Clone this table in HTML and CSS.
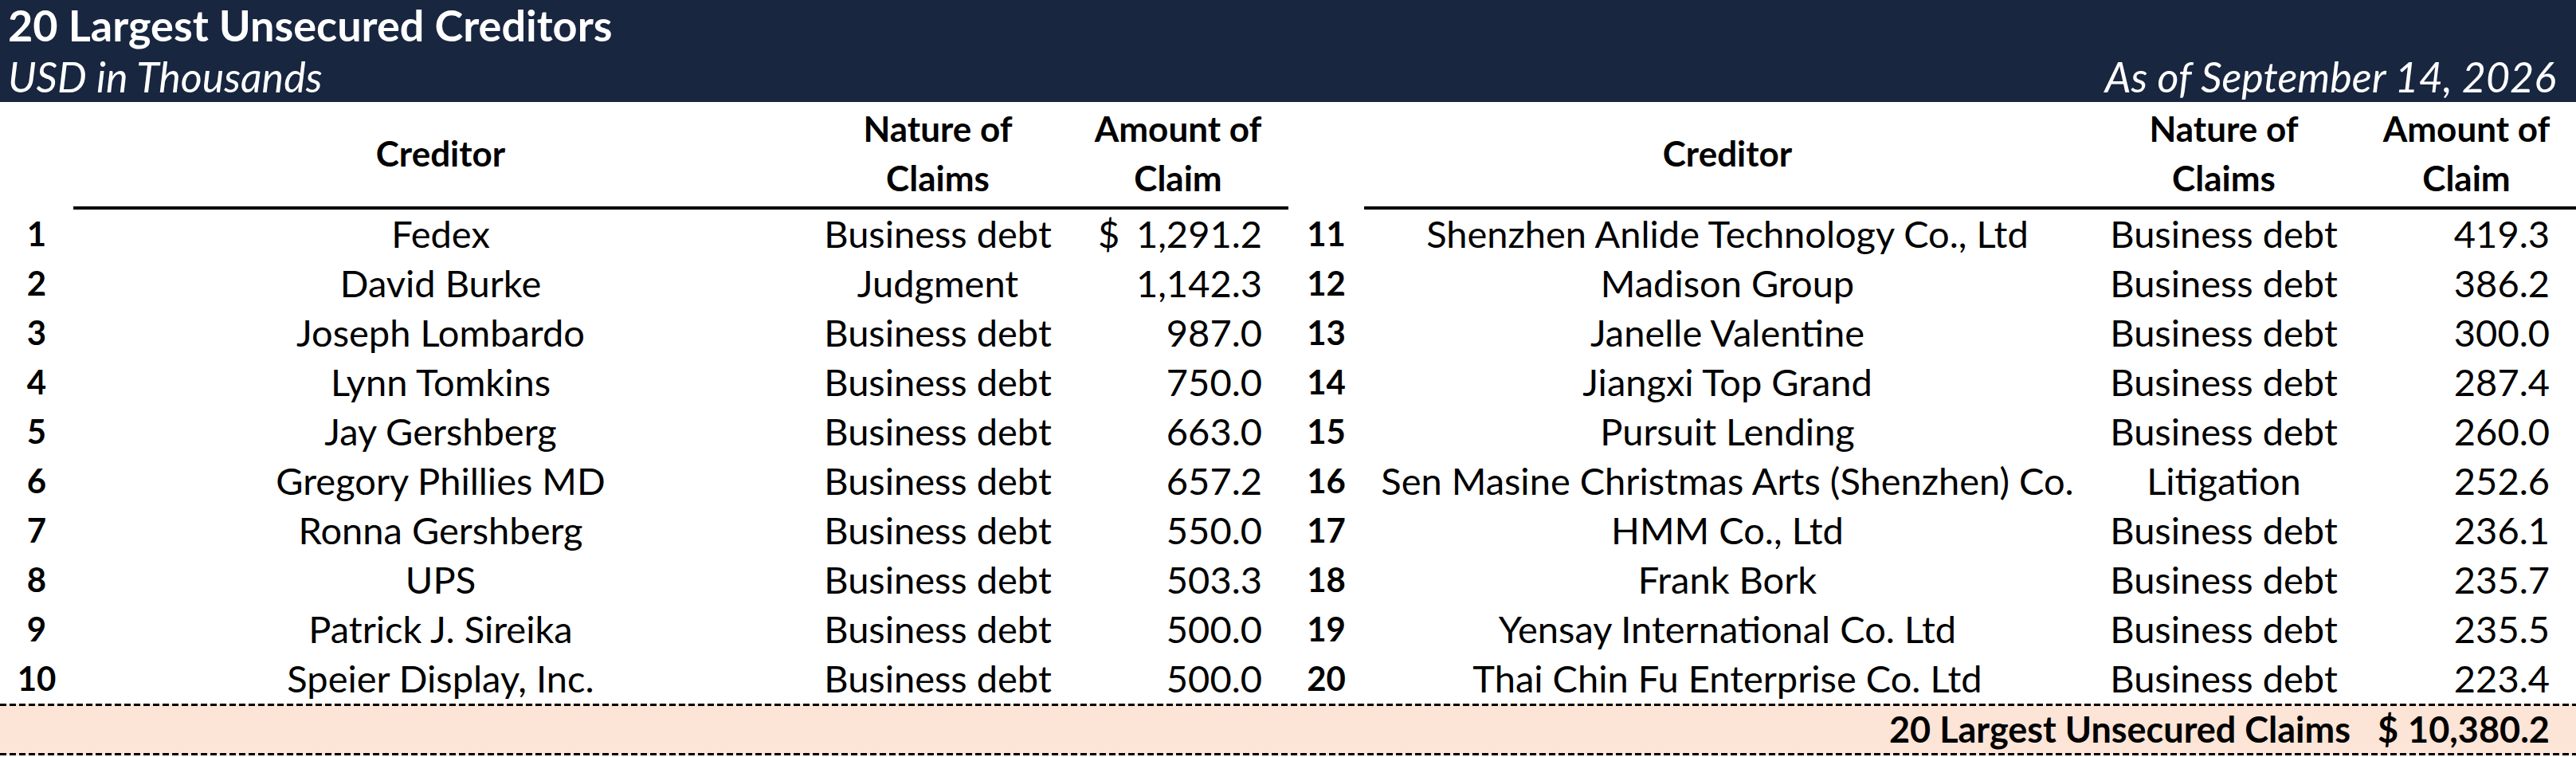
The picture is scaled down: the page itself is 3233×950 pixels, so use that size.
FILE: index.html
```html
<!DOCTYPE html>
<html lang="en">
<head>
<meta charset="utf-8">
<title>20 Largest Unsecured Creditors</title>
<link rel="stylesheet" href="styles.css">
</head>
<body>
<div class="sheet">
  <header class="banner">
    <div class="banner-row">
      <h1 class="title">20 Largest Unsecured Creditors</h1>
    </div>
    <div class="banner-row">
      <span class="subtitle">USD in Thousands</span>
      <span class="subtitle">As of September 14, 2026</span>
    </div>
  </header>

  <div class="grid">
    <div class="hd num"></div>
    <div class="hd rule">Creditor</div>
    <div class="hd rule">Nature of<br>Claims</div>
    <div class="hd rule">Amount of<br>Claim</div>
    <div class="hd num"></div>
    <div class="hd rule">Creditor</div>
    <div class="hd rule">Nature of<br>Claims</div>
    <div class="hd rule">Amount of<br>Claim</div>

    <div class="c num">1</div><div class="c">Fedex</div><div class="c">Business debt</div><div class="c amt"><span>$</span><span>1,291.2</span></div>
    <div class="c num">11</div><div class="c">Shenzhen Anlide Technology Co., Ltd</div><div class="c">Business debt</div><div class="c amt"><span>419.3</span></div>

    <div class="c num">2</div><div class="c">David Burke</div><div class="c">Judgment</div><div class="c amt"><span>1,142.3</span></div>
    <div class="c num">12</div><div class="c">Madison Group</div><div class="c">Business debt</div><div class="c amt"><span>386.2</span></div>

    <div class="c num">3</div><div class="c">Joseph Lombardo</div><div class="c">Business debt</div><div class="c amt"><span>987.0</span></div>
    <div class="c num">13</div><div class="c">Janelle Valentine</div><div class="c">Business debt</div><div class="c amt"><span>300.0</span></div>

    <div class="c num">4</div><div class="c">Lynn Tomkins</div><div class="c">Business debt</div><div class="c amt"><span>750.0</span></div>
    <div class="c num">14</div><div class="c">Jiangxi Top Grand</div><div class="c">Business debt</div><div class="c amt"><span>287.4</span></div>

    <div class="c num">5</div><div class="c">Jay Gershberg</div><div class="c">Business debt</div><div class="c amt"><span>663.0</span></div>
    <div class="c num">15</div><div class="c">Pursuit Lending</div><div class="c">Business debt</div><div class="c amt"><span>260.0</span></div>

    <div class="c num">6</div><div class="c">Gregory Phillies MD</div><div class="c">Business debt</div><div class="c amt"><span>657.2</span></div>
    <div class="c num">16</div><div class="c">Sen Masine Christmas Arts (Shenzhen) Co.</div><div class="c">Litigation</div><div class="c amt"><span>252.6</span></div>

    <div class="c num">7</div><div class="c">Ronna Gershberg</div><div class="c">Business debt</div><div class="c amt"><span>550.0</span></div>
    <div class="c num">17</div><div class="c">HMM Co., Ltd</div><div class="c">Business debt</div><div class="c amt"><span>236.1</span></div>

    <div class="c num">8</div><div class="c">UPS</div><div class="c">Business debt</div><div class="c amt"><span>503.3</span></div>
    <div class="c num">18</div><div class="c">Frank Bork</div><div class="c">Business debt</div><div class="c amt"><span>235.7</span></div>

    <div class="c num">9</div><div class="c">Patrick J. Sireika</div><div class="c">Business debt</div><div class="c amt"><span>500.0</span></div>
    <div class="c num">19</div><div class="c">Yensay International Co. Ltd</div><div class="c">Business debt</div><div class="c amt"><span>235.5</span></div>

    <div class="c num">10</div><div class="c">Speier Display, Inc.</div><div class="c">Business debt</div><div class="c amt"><span>500.0</span></div>
    <div class="c num">20</div><div class="c">Thai Chin Fu Enterprise Co. Ltd</div><div class="c">Business debt</div><div class="c amt"><span>223.4</span></div>
  </div>

  <div class="total">
    <div class="total-label">20 Largest Unsecured Claims</div>
    <div class="total-amt"><span>$</span><span>10,380.2</span></div>
  </div>
</div>
</body>
</html>
```

FILE: styles.css
```css
* { box-sizing: border-box; }

html, body {
  margin: 0;
  padding: 0;
  background: #ffffff;
}

body {
  font-family: Lato, "Open Sans", "Liberation Sans", sans-serif;
  color: #000000;
}

.sheet {
  width: 3233px;
  height: 950px;
  overflow: hidden;
}

.banner {
  background: #182640;
  color: #ffffff;
  height: 128px;
  display: flex;
  flex-direction: column;
}

.banner-row {
  height: 64px;
  display: flex;
  align-items: center;
  justify-content: space-between;
  padding: 0 25px 0 10px;
}

.title {
  margin: 0;
  font-size: 54px;
  font-weight: 700;
  line-height: 1;
}

.subtitle {
  font-size: 52px;
  font-style: italic;
  font-weight: 400;
  line-height: 1;
}

.grid {
  display: grid;
  grid-template-columns: 92px 922px 326px 277px 95px 912px 334px 275px;
  grid-template-rows: 135px;
  grid-auto-rows: 62px;
  font-size: 47px;
}

.hd {
  display: flex;
  align-items: center;
  justify-content: center;
  text-align: center;
  font-size: 44px;
  font-weight: 700;
  line-height: 62px;
  padding-bottom: 4px;
}

.hd.rule {
  border-bottom: 4px solid #000000;
}

.c {
  display: flex;
  align-items: center;
  justify-content: center;
  white-space: nowrap;
  line-height: 1;
  padding-bottom: 2px;
}

.c.num {
  font-size: 42px;
  font-weight: 700;
}

.c.amt {
  justify-content: space-between;
  padding-left: 38px;
  padding-right: 33px;
}

.c.amt span:only-child {
  margin-left: auto;
}

.total {
  height: 65px;
  background: #fce4d6;
  display: grid;
  grid-template-columns: 2958px 275px;
  font-size: 45px;
  font-weight: 700;
  background-image:
    repeating-linear-gradient(to right, #000 0 8px, transparent 8px 12px),
    repeating-linear-gradient(to right, #000 0 8px, transparent 8px 12px);
  background-size: 100% 3px, 100% 3px;
  background-position: 0 0, 0 100%;
  background-repeat: no-repeat;
}

.total-label {
  display: flex;
  align-items: center;
  justify-content: flex-end;
  padding-right: 8px;
  line-height: 1;
}

.total-amt {
  display: flex;
  align-items: center;
  justify-content: space-between;
  gap: 12px;
  padding-left: 26px;
  padding-right: 36px;
  line-height: 1;
}
```
